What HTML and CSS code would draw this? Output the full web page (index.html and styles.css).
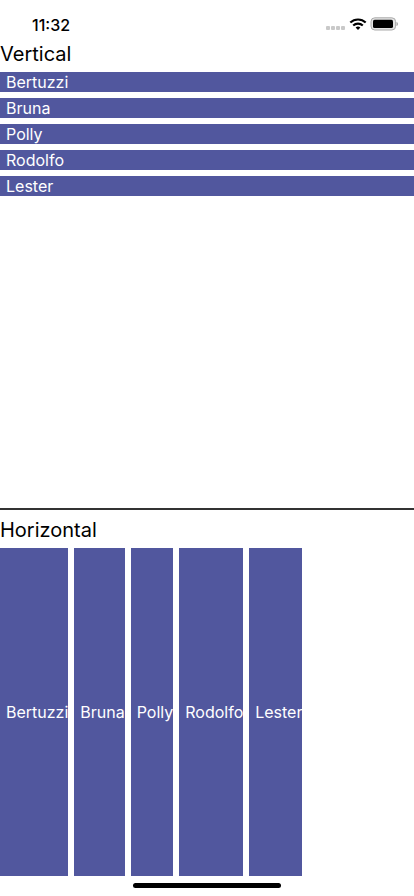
FILE: index.html
```html
<!DOCTYPE html>
<html lang="en">
<head>
<meta charset="utf-8">
<meta name="viewport" content="width=device-width, initial-scale=1">
<title>Lists</title>
<link rel="stylesheet" href="styles.css">
</head>
<body>
<header class="status">
  <time class="clock">11:32</time>
  <div class="indicators">
    <svg width="20" height="6" viewBox="0 0 20 6" fill="#c9c9c9" aria-hidden="true"><rect x="0" y="1" width="4" height="4" rx="1"/><rect x="5" y="1" width="4" height="4" rx="1"/><rect x="10" y="1" width="4" height="4" rx="1"/><rect x="15" y="1" width="4" height="4" rx="1"/></svg>
    <svg class="wifi" width="18" height="14" viewBox="0 0 18 14" fill="none" stroke="#000" stroke-width="2.1" aria-hidden="true"><path d="M1.3 5.6a11 11 0 0 1 15.4 0M4.2 8.6a6.9 6.9 0 0 1 9.6 0"/><path d="M6.6 10.6a3.5 3.5 0 0 1 4.8 0L9 13z" fill="#000" stroke="none"/></svg>
    <svg width="28" height="14" viewBox="0 0 28 14" aria-hidden="true"><rect x="1" y=".8" width="24.6" height="12.2" rx="3.8" fill="#e4e4e4" stroke="#aaa"/><rect x="3" y="2.8" width="20" height="8.2" rx="1.6" fill="#000"/><path d="M26.6 5v4c1.5-.6 1.5-3.4 0-4z" fill="#888"/></svg>
  </div>
</header>
<main class="main">
  <section class="panel">
    <h1 class="title">Vertical</h1>
    <ul class="list list-vertical">
      <li class="item">Bertuzzi</li>
      <li class="item">Bruna</li>
      <li class="item">Polly</li>
      <li class="item">Rodolfo</li>
      <li class="item">Lester</li>
    </ul>
  </section>
  <section class="panel panel-divided">
    <h1 class="title">Horizontal</h1>
    <ul class="list list-horizontal">
      <li class="item">Bertuzzi</li>
      <li class="item">Bruna</li>
      <li class="item">Polly</li>
      <li class="item">Rodolfo</li>
      <li class="item">Lester</li>
    </ul>
  </section>
</main>
<footer class="home"><div class="home-bar"></div></footer>
</body>
</html>
```
FILE: styles.css
```css
* {
  box-sizing: border-box;
}

body {
  margin: 0;
  min-height: 100vh;
  display: flex;
  flex-direction: column;
  background: #fff;
  color: #000;
  font-family: Inter, "Liberation Sans", sans-serif;
}

.status {
  display: flex;
  align-items: flex-end;
  justify-content: space-between;
  height: 41px;
  padding: 0 16px 6px 32px;
}

.clock {
  font-size: 16px;
  line-height: 20px;
  font-weight: 500;
}

.indicators {
  display: flex;
  align-items: flex-end;
  gap: 3px;
  padding-bottom: 4px;
}

.main {
  flex: 1;
  display: flex;
  flex-direction: column;
}

.panel {
  flex: 1 0 0;
  display: flex;
  flex-direction: column;
}

.panel:first-child {
  flex-basis: 107px;
}

.panel-divided {
  border-top: 2px solid #333;
  padding-top: 7px;
}

.title {
  margin: 0 0 4px;
  font-size: 20px;
  line-height: 27px;
  font-weight: 400;
}

.list {
  display: flex;
  gap: 6px;
  margin: 0;
  padding: 0;
  list-style: none;
}

.list-vertical {
  flex-direction: column;
}

.list-horizontal {
  flex: 1;
}

.item {
  display: flex;
  align-items: center;
  padding-left: 6px;
  background: #51579e;
  color: #fff;
  font-size: 16px;
  line-height: 20px;
}

.home {
  display: flex;
  justify-content: center;
  padding: 7px 0 8px;
}

.home-bar {
  width: 148px;
  height: 5px;
  border-radius: 3px;
  background: #000;
}
```
